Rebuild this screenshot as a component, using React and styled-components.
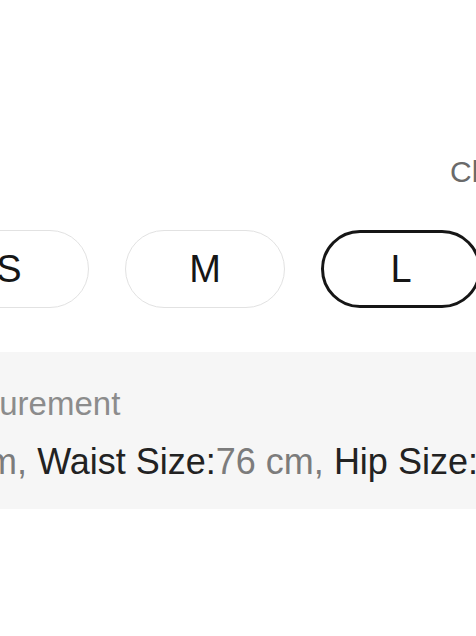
import React from "react";
import styled, { createGlobalStyle } from "styled-components";

const Global = createGlobalStyle`
  html, body { margin: 0; padding: 0; background: #ffffff; }
  body { font-family: "Liberation Sans", Arial, sans-serif; }
`;

const Viewport = styled.div`
  width: 476px;
  height: 636px;
  overflow: hidden;
  background: #ffffff;
`;

const Header = styled.div`
  display: flex;
  padding: 154px 0 0 450px;
  height: 36px;
`;

const ChartLink = styled.span`
  font-size: 30px;
  line-height: 36px;
  color: #6a6a6a;
  white-space: nowrap;
`;

const PillRow = styled.div`
  display: flex;
  gap: 36px;
  margin: 40px 0 0 -71px;
`;

const Pill = styled.div`
  flex: 0 0 auto;
  box-sizing: border-box;
  width: 160px;
  height: 78px;
  border-radius: 39px;
  border: ${(p) => (p.$selected ? "3px solid #161616" : "1.5px solid #e2e2e2")};
  display: flex;
  align-items: center;
  justify-content: center;
  font-size: 38px;
  color: #161616;
  background: #ffffff;
`;

const Panel = styled.div`
  margin-top: 44px;
  background: #f6f6f6;
  padding: 29px 0 24px;
  display: flex;
  flex-direction: column;
  gap: 12px;
`;

const Line = styled.div`
  margin-left: ${(p) => p.$offset}px;
  font-size: ${(p) => p.$size}px;
  line-height: 46px;
  white-space: nowrap;
  color: ${(p) => (p.$muted ? "#8c8c8c" : "#222222")};
`;

const Value = styled.span`
  color: #7c7c7c;
`;

const sizes = [
  { label: "S" },
  { label: "M" },
  { label: "L", selected: true },
  { label: "XL" },
];

const measures = [
  { label: "Bust Size:", value: "84 cm, " },
  { label: "Waist Size:", value: "76 cm, " },
  { label: "Hip Size:", value: "96 cm" },
];

export default function App() {
  return (
    <Viewport>
      <Global />
      <Header>
        <ChartLink>Check my size</ChartLink>
      </Header>
      <PillRow>
        {sizes.map((s) => (
          <Pill key={s.label} $selected={s.selected}>
            {s.label}
          </Pill>
        ))}
      </PillRow>
      <Panel>
        <Line $muted $size={33} $offset={-219}>
          Garment Measurement
        </Line>
        <Line $size={36} $offset={-243}>
          {measures.map((m) => (
            <React.Fragment key={m.label}>
              {m.label}
              <Value>{m.value}</Value>
            </React.Fragment>
          ))}
        </Line>
      </Panel>
    </Viewport>
  );
}
